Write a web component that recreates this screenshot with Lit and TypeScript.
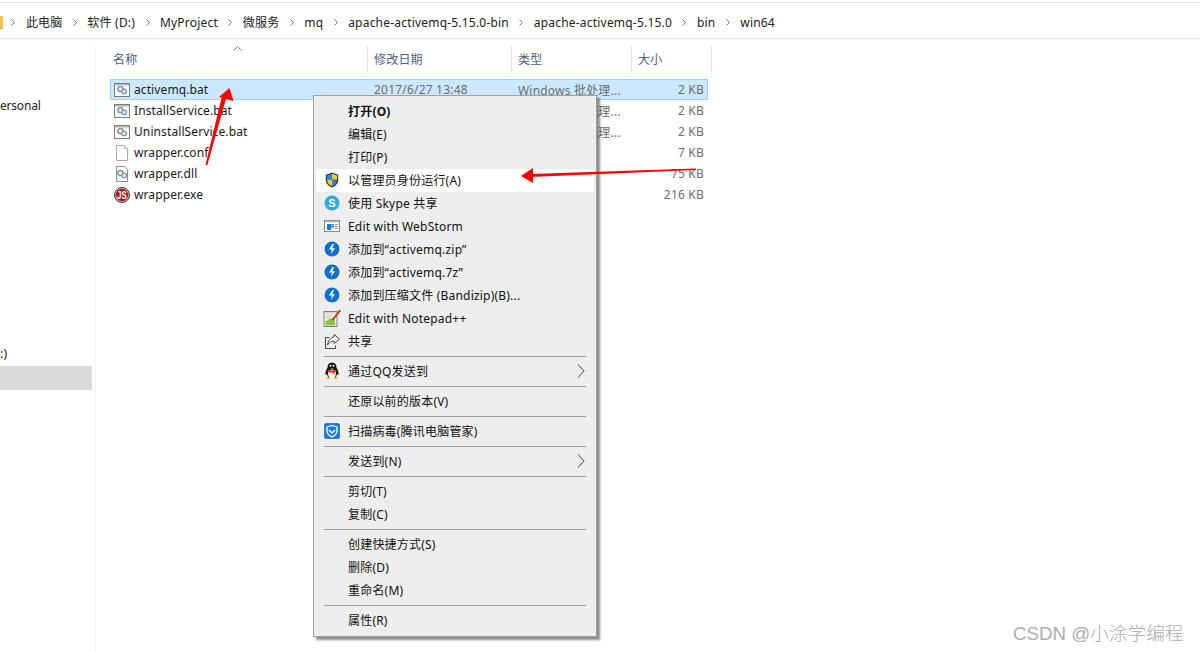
import { LitElement, html, css, svg } from "lit";
import { customElement } from "lit/decorators.js";

const gears = svg`<circle cx="6.500" cy="7" r="2.600" fill="#eef1f4" stroke="#8a949e" stroke-width="1.500"/><circle cx="10.200" cy="9.400" r="2.300" fill="#dfe6ee" stroke="#7f9ab5" stroke-width="1.300"/>`;
const batIcon = svg`<svg class="ficon" viewBox="0 0 16 16"><rect x=".5" y="1.500" width="15" height="13" fill="#fbfbfb" stroke="#7d7d7d"/><rect x="1" y="2" width="14" height="1.500" fill="#b8b8b8"/>${gears}</svg>`;
const confIcon = svg`<svg class="ficon" viewBox="0 0 16 16"><path d="M2.500.5h8l3 3v12h-11z" fill="#fff" stroke="#a8a8a8"/><path d="M10.500.5v3h3" fill="#f0f0f0" stroke="#b8b8b8"/></svg>`;
const dllIcon = svg`<svg class="ficon" viewBox="0 0 16 16"><path d="M2.500.5h8l3 3v12h-11z" fill="#fff" stroke="#8c8c8c"/>${gears}</svg>`;
const exeIcon = svg`<svg class="ficon" viewBox="0 0 16 16"><circle cx="8" cy="8" r="7.500" fill="#c9c9c9" stroke="#333"/><circle cx="8" cy="8" r="6.200" fill="#b3121a"/><text x="8" y="12" text-anchor="middle" font-size="11" font-weight="700" font-family="Liberation Sans" fill="#fff" textLength="10" lengthAdjust="spacingAndGlyphs">JS</text></svg>`;

const shield = svg`<svg class="micon" viewBox="0 0 16 18"><path d="M8 .5 15 3v6c0 4-3 7-7 8.500C4 16 1 13 1 9V3z" fill="#2d3e52"/><path d="M8 2 2.300 4v4.600H8z" fill="#2f7fd6"/><path d="M8 2l5.700 2v4.600H8z" fill="#f7c62f"/><path d="M2.300 8.600H8V16c-3-1.200-5.200-3.600-5.700-7.400z" fill="#f7c62f"/><path d="M13.700 8.600H8V16c3-1.200 5.200-3.600 5.700-7.400z" fill="#2f7fd6"/></svg>`;
const skype = svg`<svg class="micon" viewBox="0 0 16 16"><circle cx="8" cy="8" r="7.500" fill="#2fa9e4"/><text x="8" y="12" text-anchor="middle" font-size="11" font-weight="700" font-family="Liberation Sans" fill="#fff">S</text></svg>`;
const webstorm = svg`<svg class="micon" viewBox="0 0 16 16"><rect x=".5" y="2.500" width="15" height="11" fill="#fff" stroke="#8a8a8a"/><rect x="1" y="3" width="14" height="1.500" fill="#c4c4c4"/><rect x="3" y="6" width="4" height="6" fill="#1c7cd6"/><rect x="7" y="6" width="3" height="4" fill="#5aa7e8"/><path d="M11 6.500h3M11 8.500h3M11 10.500h3" stroke="#9a9a9a"/></svg>`;
const bandizip = svg`<svg class="micon" viewBox="0 0 16 16"><circle cx="8" cy="8" r="7.500" fill="#0f6fce"/><path d="M8.500 3 5 8.500h3L6.800 13 11 7.300H8.300L10 3z" fill="#fff"/></svg>`;
const notepad = svg`<svg class="micon tall" viewBox="0 0 18 18"><rect x="1" y="2.500" width="13" height="15" fill="#f4f6e6" stroke="#7c7c7c"/><path d="M2 3h11v2H2z" fill="#d8d8d8"/><path d="M2.500 12 12 7.500v9h-9.500z" fill="#8cc63f"/><path d="M3 7h6M3 9h4" stroke="#b5b5b5"/><path d="M16.500 .5 9 10l-.5 2 2-1L18 2z" fill="#b5402a"/></svg>`;
const share = svg`<svg class="micon" viewBox="0 0 16 16"><path d="M5.500 4.500h-4v11h10v-3" fill="none" stroke="#444"/><path d="M10 1.500 15.500 6 10 10.500V8C7 8 5 9.500 3.500 12 4 7.500 6.500 4.500 10 4z" fill="#fff" stroke="#444"/></svg>`;
const qq = svg`<svg class="micon tall" viewBox="0 0 16 18"><path d="M8 .5c3 0 4.500 2.200 4.500 5 1.500 2.500 2.500 5.500 2 7-.5.800-1.500-.5-1.500-.5-.3 1.500-1 2.500-1.500 3h-7c-.5-.5-1.200-1.500-1.500-3 0 0-1 1.300-1.500.5-.5-1.500.5-4.500 2-7C3.500 2.700 5 .5 8 .5z" fill="#111"/><path d="M4.500 8c-1 3-.5 5.500 1 7.500h5c1.500-2 2-4.500 1-7.500z" fill="#fff"/><path d="M3.500 7.500c3 1.500 6 1.500 9 0v2l-2 .5v3l-2-2.500c-2 .3-4 0-5-1z" fill="#e21b1b"/><path d="M5.800 6.500h4.400L8 8z" fill="#f5b400"/><circle cx="6.500" cy="3.800" r="1" fill="#fff"/><circle cx="9.500" cy="3.800" r="1" fill="#fff"/><path d="M2.500 15.500c1-.8 3-.8 4 .5-.5 1.500-3.500 1.500-4-.5zM13.500 15.500c-1-.8-3-.8-4 .5.500 1.500 3.500 1.500 4-.5z" fill="#f5a800"/></svg>`;
const guard = svg`<svg class="micon" viewBox="0 0 16 16"><rect x=".5" y=".5" width="15" height="15" rx="1.500" fill="#1478f0" stroke="#0b3d91" stroke-width=".5"/><path d="M8 2.500 13 4v4c0 2.800-2 4.500-5 6-3-1.500-5-3.200-5-6V4z" fill="none" stroke="#fff" stroke-width="1.300"/><path d="M5 7l3 3 3-3" fill="none" stroke="#fff" stroke-width="1.500"/></svg>`;
const chevron = svg`<svg class="subarrow" viewBox="0 0 8 14"><path d="M1 .5 7 7l-6 6.500" fill="none" stroke="#5d6b80" stroke-width="1.100"/></svg>`;

type Entry = { t?: string; icon?: unknown; bold?: boolean; hot?: boolean; sub?: boolean; sep?: boolean };
const SEP: Entry = { sep: true };
const MENU: Entry[] = [
  { t: "打开(O)", bold: true }, { t: "编辑(E)" }, { t: "打印(P)" },
  { t: "以管理员身份运行(A)", icon: shield, hot: true },
  { t: "使用 Skype 共享", icon: skype },
  { t: "Edit with WebStorm", icon: webstorm },
  { t: "添加到“activemq.zip”", icon: bandizip },
  { t: "添加到“activemq.7z”", icon: bandizip },
  { t: "添加到压缩文件 (Bandizip)(B)...", icon: bandizip },
  { t: "Edit with Notepad++", icon: notepad },
  { t: "共享", icon: share }, SEP,
  { t: "通过QQ发送到", icon: qq, sub: true }, SEP,
  { t: "还原以前的版本(V)" }, SEP,
  { t: "扫描病毒(腾讯电脑管家)", icon: guard }, SEP,
  { t: "发送到(N)", sub: true }, SEP,
  { t: "剪切(T)" }, { t: "复制(C)" }, SEP,
  { t: "创建快捷方式(S)" }, { t: "删除(D)" }, { t: "重命名(M)" }, SEP,
  { t: "属性(R)" },
];

const CRUMBS = ["此电脑", "软件 (D:)", "MyProject", "微服务", "mq", "apache-activemq-5.15.0-bin", "apache-activemq-5.15.0", "bin", "win64"];

const BAT = "Windows 批处理...";
const FILES = [
  { n: "activemq.bat", i: batIcon, d: "2017/6/27 13:48", ty: BAT, s: "2 KB", sel: true },
  { n: "InstallService.bat", i: batIcon, d: "", ty: BAT, s: "2 KB" },
  { n: "UninstallService.bat", i: batIcon, d: "", ty: BAT, s: "2 KB" },
  { n: "wrapper.conf", i: confIcon, d: "", ty: "", s: "7 KB" },
  { n: "wrapper.dll", i: dllIcon, d: "", ty: "", s: "75 KB" },
  { n: "wrapper.exe", i: exeIcon, d: "", ty: "", s: "216 KB" },
];

@customElement("app-root")
export class AppRoot extends LitElement {
  static styles = css`
    :host { display: block; position: relative; width: 1200px; height: 652px; overflow: hidden; background: #fff;
      font-family: "Noto Sans", "Noto Sans CJK SC", sans-serif; font-size: 12px; letter-spacing: .2px; color: #1a1a1a; }
    .topline { height: 1px; margin-top: 2px; background: #e3e3e3; }
    .crumbs { display: flex; align-items: center; height: 36px; padding-top: 3px; box-sizing: border-box; border-bottom: 1px solid #e5e5e5; gap: 9px; white-space: nowrap; color: #222; }
    .folder { width: 3px; height: 12px; background: #f3c34f; border-bottom: 1px solid #d9a52e; flex: none; margin-right: -2px; }
    .sepc { width: 4px; height: 7px; flex: none; margin: 0 1.450px; }
    .body { display: flex; height: 613px; }
    .side { width: 92px; flex: none; padding-top: 55px; box-sizing: border-box; overflow: hidden; }
    .side div { height: 24px; line-height: 24px; white-space: nowrap; color: #222; }
    .side .org { letter-spacing: -.2px; }
    .side .drive { margin-top: 224px; }
    .side .cur { height: 24px; background: #d9d9d9; }
    .main { margin: 7px 0 0 3px; border-left: 1px solid #f1f1f1; flex: 1; }
    .head { display: grid; grid-template-columns: 255px 144px 120px 80px; height: 27px; margin-left: 17px; position: relative; color: #50617a; }
    .head div { border-right: 1px solid #e5e5e5; padding-left: 6px; line-height: 27px; box-sizing: border-box; }
    .head div:first-child { padding-left: 0; }
    .caret { position: absolute; left: 120px; top: 0; width: 9px; height: 5px; }
    .rows { margin: 6px 0 0 14px; width: 598px; }
    .row { display: grid; grid-template-columns: 20px 240px 144px 1fr auto; align-items: center; height: 21px; box-sizing: border-box; border: 1px solid transparent; padding: 0 3px; color: #6d6d6d; white-space: nowrap; }
    .row.sel { background: #cce8ff; border-color: #99d1ff; }
    .row .name { color: #1a1a1a; letter-spacing: .1px; }
    .ficon { width: 16px; height: 16px; }
    .menu { position: absolute; left: 313px; top: 95px; width: 284px; height: 542px; box-sizing: border-box; padding: 4px 2px; background: #eee; border: 1px solid #a0a0a0; box-shadow: 3px 3px 2px rgba(0,0,0,.45); color: #111; }
    .item { display: flex; align-items: center; height: 23px; box-sizing: border-box; padding-bottom: 1px; position: relative; white-space: nowrap; }
    .item.hot { background: #fff; }
    .item.bold { font-weight: 700; }
    .slot { width: 32px; flex: none; display: flex; justify-content: center; }
    .micon { width: 16px; height: 16px; flex: none; }
    .micon.tall { width: 18px; height: 18px; }
    .subarrow { position: absolute; right: 9px; top: 4px; width: 8px; height: 14px; }
    .sep { height: 1px; margin: 3px 8px 3px 8px; background: #a0a0a0; }
    .arrows { position: absolute; inset: 0; width: 1200px; height: 652px; pointer-events: none; }
    .mark { position: absolute; left: 1013px; top: 621px; font-family: "Liberation Sans", "Noto Sans CJK SC", sans-serif; font-size: 18.700px; font-weight: 300; letter-spacing: 0; line-height: 26px; color: #adadad; white-space: nowrap; }
  `;

  render() {
    return html`
      <div class="topline"></div>
      <nav class="crumbs">
        <span class="folder"></span>
        ${CRUMBS.map(
          (c) => html`<svg class="sepc" viewBox="0 0 4 7"><path d="M.5.5l3 3-3 3" fill="none" stroke="#777"/></svg><span>${c}</span>`
        )}
      </nav>
      <div class="body">
        <aside class="side">
          <div class="org">ersonal</div>
          <div class="drive">:)</div>
          <div class="cur"></div>
        </aside>
        <section class="main">
          <div class="head">
            <div>名称</div><div>修改日期</div><div>类型</div><div>大小</div>
            <svg class="caret" viewBox="0 0 9 5"><path d="M.5 4.500l4-4 4 4" fill="none" stroke="#888"/></svg>
          </div>
          <div class="rows">
            ${FILES.map(
              (f) => html`<div class="row ${f.sel ? "sel" : ""}">
                ${f.i}<span class="name">${f.n}</span><span>${f.d}</span><span>${f.ty}</span><span>${f.s}</span>
              </div>`
            )}
          </div>
        </section>
      </div>
      <div class="menu">
        ${MENU.map((m) =>
          m.sep
            ? html`<div class="sep"></div>`
            : html`<div class="item ${m.hot ? "hot" : ""} ${m.bold ? "bold" : ""}">
                <span class="slot">${m.icon ?? ""}</span><span>${m.t}</span>${m.sub ? chevron : ""}
              </div>`
        )}
      </div>
      <svg class="arrows" viewBox="0 0 1200 652" fill="#f00">
        <path d="M205.500 164.700 207.300 165.300 226.500 97 222 96z"/>
        <path d="M229.500 88 219 97 233.500 101z"/>
        <path d="M696 168.500 696 170 530 177 530 174z"/>
        <path d="M521 176 533 168 533 183z"/>
      </svg>
      <div class="mark">CSDN @小涂学编程</div>
    `;
  }
}
